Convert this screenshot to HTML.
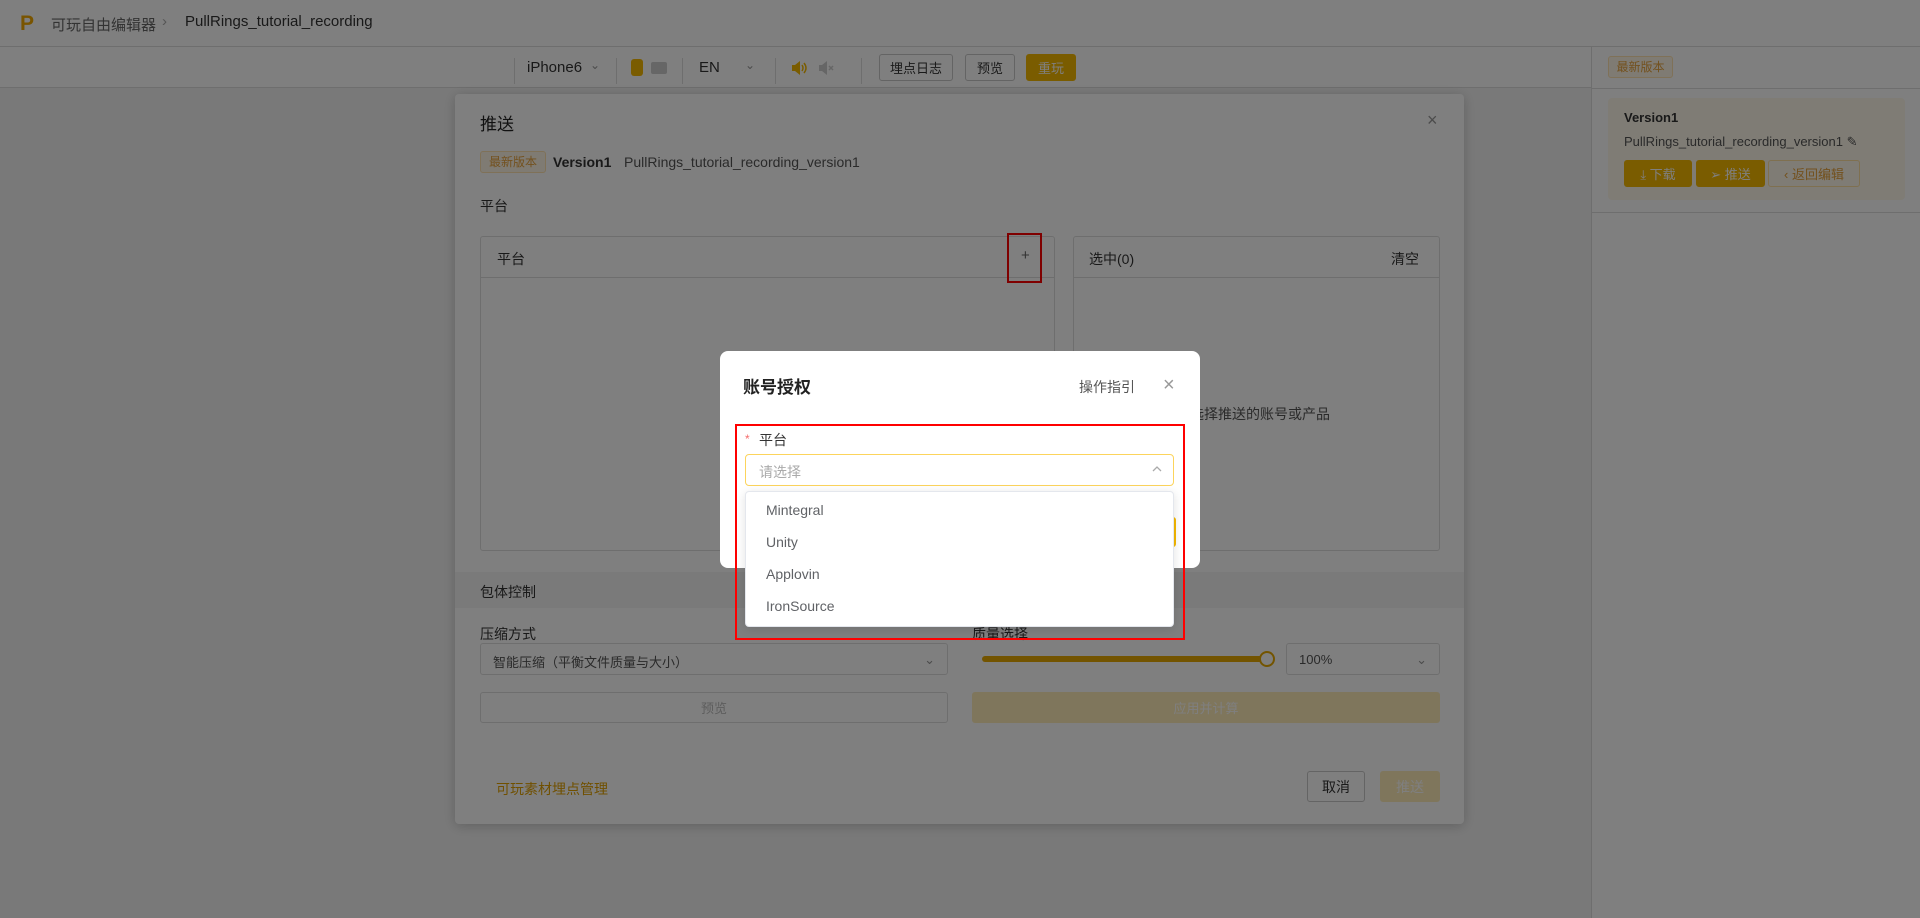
<!DOCTYPE html>
<html><head><meta charset="utf-8"><style>
*{box-sizing:border-box;margin:0;padding:0}
body{width:1920px;height:918px;overflow:hidden;background:#f3f3f3;font-family:"Liberation Sans","Noto Sans CJK SC",sans-serif;color:#333;font-size:14px;position:relative}
.a{position:absolute}
.btn{position:absolute;border:1px solid #c8c8c8;border-radius:3px;background:#fff;font-size:13px;display:flex;align-items:center;justify-content:center;color:#333}
.y{background:#f5b800;border-color:#f5b800;color:#fff}
.div{position:absolute;top:58px;width:1px;height:26px;background:#ddd}
</style></head><body>
<div class="a" style="left:0;top:0;width:1920px;height:47px;background:#fff;border-bottom:1px solid #ddd"></div>
<div class="a" style="left:20px;top:12px;font-size:21px;font-weight:bold;color:#f2a900">P</div>
<div class="a" style="left:51px;top:14px;font-size:15px;color:#666">可玩自由编辑器</div>
<div class="a" style="left:162px;top:13px;font-size:15px;color:#aaa">›</div>
<div class="a" style="left:185px;top:13px;font-size:15px;color:#333">PullRings_tutorial_recording</div>
<div class="a" style="left:0;top:47px;width:1591px;height:41px;background:#fff;border-bottom:1px solid #ddd"></div>
<div class="div" style="left:514px"></div>
<div class="a" style="left:527px;top:59px;font-size:15px">iPhone6</div>
<div class="a" style="left:590px;top:58px;font-size:12px;color:#999">⌄</div>
<div class="div" style="left:616px"></div>
<div class="a" style="left:631px;top:59px;width:12px;height:17px;border-radius:3px;background:#f5b800"></div>
<div class="a" style="left:651px;top:62px;width:16px;height:12px;border-radius:2px;background:#ccc"></div>
<div class="div" style="left:682px"></div>
<div class="a" style="left:699px;top:59px;font-size:15px">EN</div>
<div class="a" style="left:745px;top:58px;font-size:12px;color:#999">⌄</div>
<div class="div" style="left:775px"></div>
<svg class="a" style="left:790px;top:59px" width="18" height="18" viewBox="0 0 18 18"><path d="M2 6h3l5-4v14l-5-4H2z" fill="#f5b800"/><path d="M12 6q2 3 0 6M14 4q4 5 0 10" stroke="#f5b800" stroke-width="1.5" fill="none"/></svg>
<svg class="a" style="left:817px;top:59px" width="18" height="18" viewBox="0 0 18 18"><path d="M2 6h3l5-4v14l-5-4H2z" fill="#ccc"/><path d="M12 7l4 4M16 7l-4 4" stroke="#ccc" stroke-width="1.5"/></svg>
<div class="div" style="left:861px"></div>
<div class="btn" style="left:879px;top:54px;width:74px;height:27px">埋点日志</div>
<div class="btn" style="left:965px;top:54px;width:50px;height:27px">预览</div>
<div class="btn y" style="left:1026px;top:54px;width:50px;height:27px">重玩</div>
<div class="a" style="left:1591px;top:47px;width:329px;height:871px;background:#fff;border-left:1px solid #ddd"></div>
<div class="a" style="left:1591px;top:88px;width:329px;height:1px;background:#ddd"></div>
<div class="a" style="left:1608px;top:56px;width:65px;height:22px;border:1px solid #ffe3b0;background:#fff6e6;border-radius:3px;color:#e6a23c;font-size:12px;text-align:center;line-height:20px">最新版本</div>
<div class="a" style="left:1608px;top:98px;width:297px;height:102px;background:#fff9eb;border-radius:4px"></div>
<div class="a" style="left:1624px;top:110px;font-size:13px;font-weight:bold">Version1</div>
<div class="a" style="left:1624px;top:134px;font-size:13px;color:#555">PullRings_tutorial_recording_version1 ✎</div>
<div class="btn y" style="left:1624px;top:160px;width:68px;height:27px;font-size:13px">⤓ 下载</div>
<div class="btn y" style="left:1696px;top:160px;width:69px;height:27px;font-size:13px">➢ 推送</div>
<div class="btn" style="left:1768px;top:160px;width:92px;height:27px;border-color:#ffe0a0;color:#e6a23c;background:#fff9eb">‹ 返回编辑</div>
<div class="a" style="left:1591px;top:212px;width:329px;height:1px;background:#ddd"></div>
<div class="a" style="left:455px;top:94px;width:1009px;height:730px;background:#fff;border-radius:4px;box-shadow:0 2px 12px rgba(0,0,0,.2)"></div>
<div class="a" style="left:480px;top:110px;font-size:17px;color:#222">推送</div>
<div class="a" style="left:1427px;top:110px;font-size:18px;color:#999">×</div>
<div class="a" style="left:480px;top:151px;width:66px;height:22px;border:1px solid #ffe3b0;background:#fff6e6;border-radius:3px;color:#e6a23c;font-size:12px;text-align:center;line-height:20px">最新版本</div>
<div class="a" style="left:553px;top:154px;font-size:14px;font-weight:bold">Version1</div>
<div class="a" style="left:624px;top:154px;font-size:14px;color:#555">PullRings_tutorial_recording_version1</div>
<div class="a" style="left:480px;top:196px;font-size:14px">平台</div>
<div class="a" style="left:480px;top:236px;width:575px;height:315px;border:1px solid #ddd;border-radius:3px"></div>
<div class="a" style="left:480px;top:277px;width:575px;height:1px;background:#ddd"></div>
<div class="a" style="left:497px;top:249px">平台</div>
<div class="a" style="left:1021px;top:247px;font-size:15px;color:#666">+</div>
<div class="a" style="left:1007px;top:233px;width:35px;height:50px;border:2px solid #f00"></div>
<div class="a" style="left:1073px;top:236px;width:367px;height:315px;border:1px solid #ddd;border-radius:3px"></div>
<div class="a" style="left:1073px;top:277px;width:367px;height:1px;background:#ddd"></div>
<div class="a" style="left:1089px;top:249px">选中(0)</div>
<div class="a" style="left:1391px;top:249px">清空</div>
<div class="a" style="left:1176px;top:404px;color:#555">请选择推送的账号或产品</div>
<div class="a" style="left:455px;top:572px;width:1009px;height:36px;background:#f5f5f5"></div>
<div class="a" style="left:480px;top:582px">包体控制</div>
<div class="a" style="left:480px;top:624px">压缩方式</div>
<div class="a" style="left:480px;top:643px;width:468px;height:32px;border:1px solid #ddd;border-radius:3px;font-size:13px;color:#555;padding:8px 12px">智能压缩（平衡文件质量与大小）<span style="float:right;color:#999">⌄</span></div>
<div class="a" style="left:972px;top:624px">质量选择</div>
<div class="a" style="left:982px;top:656px;width:284px;height:6px;border-radius:3px;background:#e6a800"></div>
<div class="a" style="left:1259px;top:651px;width:16px;height:16px;border-radius:50%;border:2px solid #e6a800;background:#fff"></div>
<div class="a" style="left:1286px;top:643px;width:154px;height:32px;border:1px solid #ddd;border-radius:3px;font-size:13px;color:#555;padding:8px 12px">100%<span style="float:right;color:#999">⌄</span></div>
<div class="btn" style="left:480px;top:692px;width:468px;height:31px;color:#bbb;border-color:#ddd">预览</div>
<div class="btn" style="left:972px;top:692px;width:468px;height:31px;background:#ffedb8;border-color:#ffedb8;color:#fff">应用并计算</div>
<div class="a" style="left:496px;top:779px;color:#e0a000">可玩素材埋点管理</div>
<div class="btn" style="left:1307px;top:771px;width:58px;height:31px;font-size:14px">取消</div>
<div class="btn" style="left:1380px;top:771px;width:60px;height:31px;background:#ffedb8;border-color:#ffedb8;color:#fff;font-size:14px">推送</div>
<div class="a" style="left:0;top:0;width:1920px;height:918px;background:rgba(0,0,0,.5)"></div>
<div class="a" style="left:720px;top:351px;width:480px;height:217px;background:#fff;border-radius:8px"></div>
<div class="a" style="left:743px;top:373px;font-size:17px;font-weight:bold;color:#222">账号授权</div>
<div class="a" style="left:1079px;top:377px;font-size:14px;color:#555">操作指引</div>
<div class="a" style="left:1163px;top:374px;font-size:20px;color:#999">×</div>
<div class="a" style="left:1110px;top:517px;width:66px;height:30px;background:#f5b800;border-radius:3px"></div>
<div class="a" style="left:735px;top:424px;width:450px;height:216px;border:2px solid #f00"></div>
<div class="a" style="left:745px;top:432px;color:#f56c6c;font-size:12px">*</div>
<div class="a" style="left:759px;top:430px;font-size:14px;color:#333">平台</div>
<div class="a" style="left:745px;top:454px;width:429px;height:32px;border:1px solid #fcd45c;border-radius:4px;font-size:14px;color:#aaa;padding:7px 13px">请选择</div>
<svg class="a" style="left:1152px;top:465px" width="10" height="8" viewBox="0 0 10 8"><path d="M1 6l4-4 4 4" stroke="#aaa" stroke-width="1.3" fill="none"/></svg>
<div class="a" style="left:745px;top:491px;width:429px;height:136px;background:#fff;border:1px solid #e4e7ed;border-radius:4px;box-shadow:0 2px 10px rgba(0,0,0,.12)"></div>
<div class="a" style="left:766px;top:502px;font-size:14px;color:#606266">Mintegral</div>
<div class="a" style="left:766px;top:534px;font-size:14px;color:#606266">Unity</div>
<div class="a" style="left:766px;top:566px;font-size:14px;color:#606266">Applovin</div>
<div class="a" style="left:766px;top:598px;font-size:14px;color:#606266">IronSource</div>
</body></html>
